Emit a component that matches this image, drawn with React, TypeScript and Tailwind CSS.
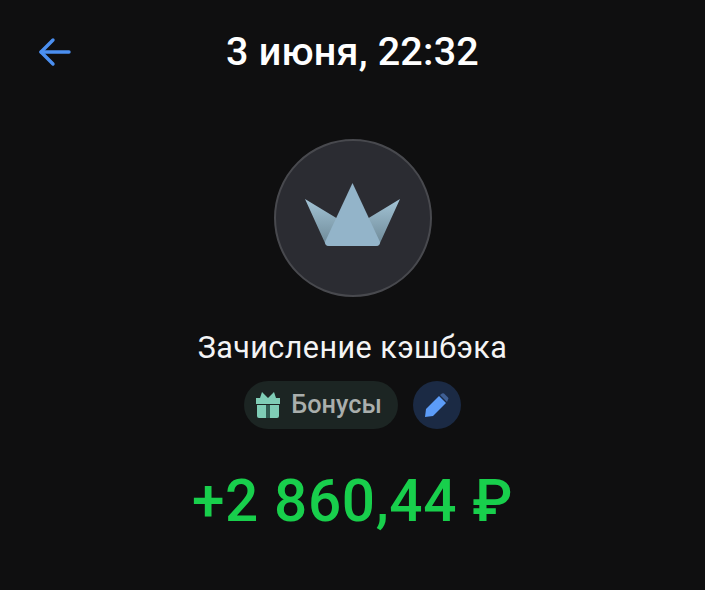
function BackArrow() {
  return (
    <svg width="34" height="30" viewBox="0 0 34 30" fill="none" stroke="#4b8ff0" strokeWidth="3.4" strokeLinecap="round" strokeLinejoin="round">
      <path d="M3 15H31" />
      <path d="M15 3L3 15L15 27" />
    </svg>
  );
}

function CrownIcon() {
  return (
    <svg width="96" height="64" viewBox="0 0 96 64">
      <defs>
        <linearGradient id="wing" x1="0" y1="0" x2="0" y2="1">
          <stop offset="0" stopColor="#a3c4d6" />
          <stop offset="1" stopColor="#6d8896" />
        </linearGradient>
      </defs>
      <path d="M0 16L33 36L47 63H24Q21 63 20 60Z" fill="url(#wing)" />
      <path d="M95 16L62 36L48 63H71Q74 63 75 60Z" fill="url(#wing)" />
      <path d="M47.5 0L75 59Q75 63 71 63H24Q20 63 20 59Z" fill="#93b4c9" />
    </svg>
  );
}

function Gift() {
  return (
    <svg width="26" height="26" viewBox="0 0 26 26" fill="#7fcdb6">
      <path d="M7 0L13 6L19 0L21 6H25V12H1V6H5Z" />
      <path d="M2 13H24V24Q24 26 22 26H4Q2 26 2 24Z" />
      <path d="M11 13H15V26H11Z" fill="#2f5a50" />
    </svg>
  );
}

function Pencil() {
  return (
    <svg width="24" height="24" viewBox="0 0 24 24">
      <path d="M0 24L1 16L14 3L21 10L8 23Z" fill="#5c9cf8" />
      <path d="M15 2L17 0.5Q18 0 19 0.5L23 4.5Q24 5.5 23 6.5L22 9Z" fill="#3f5f94" />
    </svg>
  );
}

export default function App() {
  return (
    <div className="flex h-[590px] w-[705px] flex-col overflow-hidden bg-[#0f0f10] font-['Roboto','Liberation_Sans',sans-serif] text-white">
      <header className="relative flex h-[104px] items-center justify-center">
        <div className="absolute left-[38px] top-[37px]">
          <BackArrow />
        </div>
        <h1 className="text-[39.5px] font-medium leading-none tracking-[0.2px]">3 июня, 22:32</h1>
      </header>

      <div className="mt-[35px] flex flex-col items-center">
        <div className="flex h-[158px] w-[158px] items-center justify-center rounded-full border-2 border-[#48494e] bg-[#2b2c32] pb-[6px]">
          <CrownIcon />
        </div>
        <p className="mt-[31px] text-[30.5px] leading-[40px] tracking-[0.45px] text-[#f4f4f5]">Зачисление кэшбэка</p>
        <div className="mt-[13px] flex items-center gap-[15px]">
          <div className="flex h-[48px] items-center gap-[10px] rounded-full bg-[#1c2523] pl-[11px] pr-[16px]">
            <Gift />
            <span className="text-[25.3px] font-medium text-[#a9aeac]">Бонусы</span>
          </div>
          <div className="flex h-[48px] w-[48px] items-center justify-center rounded-full bg-[#1b2a44]">
            <Pencil />
          </div>
        </div>
        <p className="mt-[37px] text-[58.5px] font-medium leading-[70px] tracking-[0.6px] text-[#18cf4c]">+2 860,44 ₽</p>
      </div>
    </div>
  );
}
